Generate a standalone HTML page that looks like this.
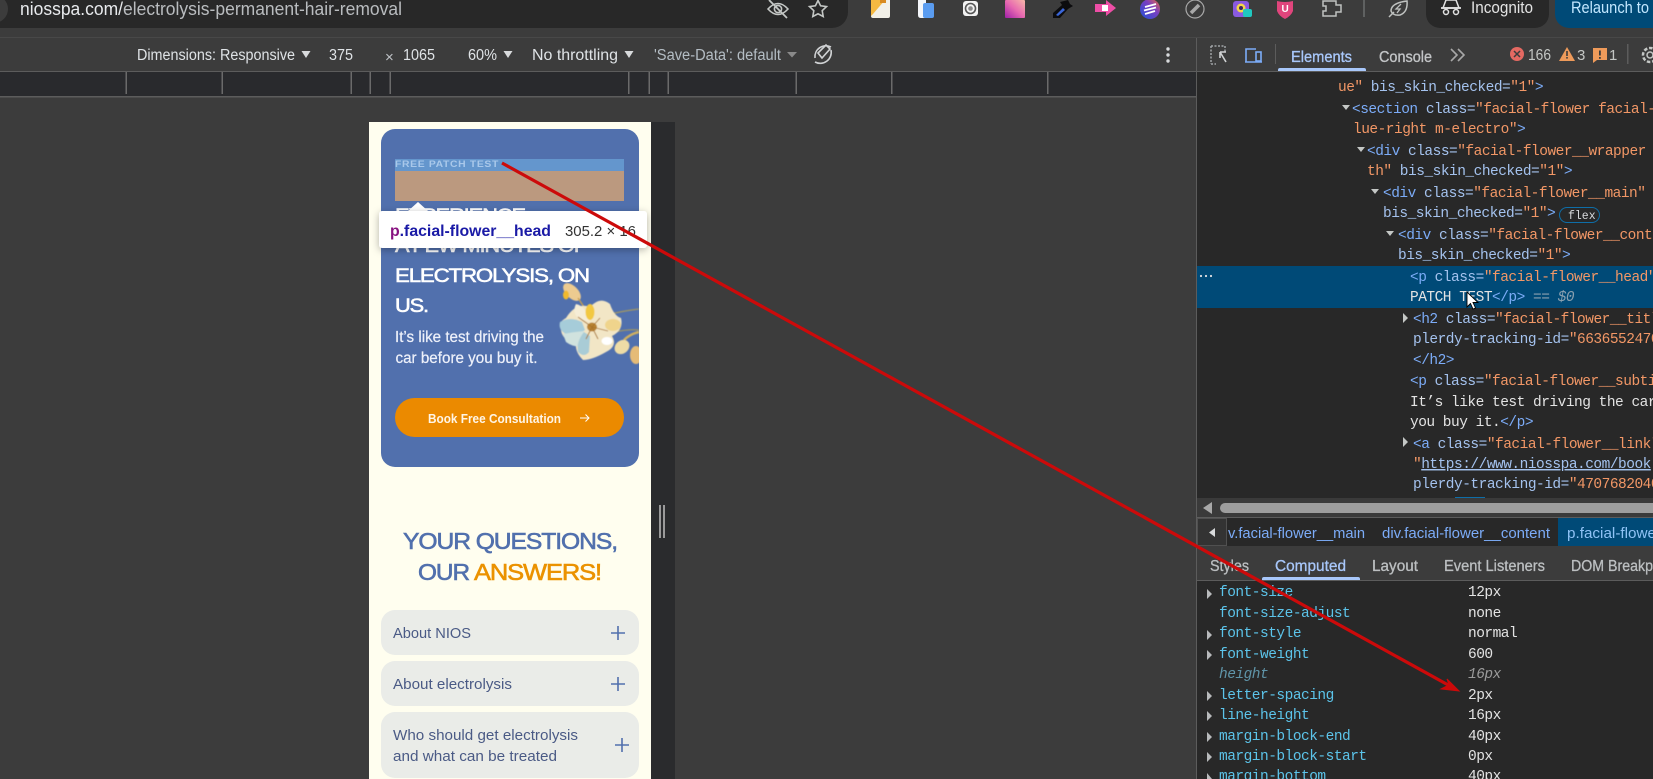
<!DOCTYPE html>
<html lang="en"><head><meta charset="utf-8"><title>niosspa.com</title>
<style>
html,body{margin:0;padding:0;background:#3c3c3c;overflow:hidden;width:1653px;height:779px}
svg{display:block;position:absolute;left:0;top:0}
text{white-space:pre;font-family:"Liberation Sans",sans-serif}
.ui{fill:#dfe3e6;font-size:15.5px}
.m{font-family:"Liberation Mono",monospace;font-size:14.5px;letter-spacing:-.5px;stroke-width:.15px}
.t{fill:#7cacf8}.a{fill:#a4c2ee}.v{fill:#f29766}.w{fill:#e3e3e3}
.n{fill:#5cc4ea}.val{fill:#e3e3e3}
</style></head><body>
<svg width="1653" height="779" viewBox="0 0 1653 779" xmlns="http://www.w3.org/2000/svg">
<defs>
<clipPath id="card"><rect x="381" y="129" width="258" height="338" rx="14"/></clipPath>
<clipPath id="dt"><rect x="1197" y="72" width="456" height="707"/></clipPath>
<filter id="sh" x="-10%" y="-30%" width="120%" height="170%"><feDropShadow dx="0" dy="2" stdDeviation="4" flood-color="#000" flood-opacity=".3"/></filter>
<filter id="bl"><feGaussianBlur stdDeviation=".5"/></filter>
<linearGradient id="pk" x1="0" y1="1" x2="1" y2="0"><stop offset="0" stop-color="#a020a8"/><stop offset=".5" stop-color="#e86ab0"/><stop offset="1" stop-color="#f8b8a8"/></linearGradient>
<linearGradient id="ci" x1="0" y1="1" x2="1" y2="0"><stop offset="0" stop-color="#2050d8"/><stop offset=".6" stop-color="#7a3fc0"/><stop offset="1" stop-color="#f06a3a"/></linearGradient>
</defs>
<rect width="1653" height="779" fill="#3c3c3c"/>

<!-- Browser top bar -->
<path d="M0 0H848V12A16 16 0 0 1 832 28H0Z" fill="#282828"/>
<circle cx="-6" cy="9" r="14" fill="#3c3c3c"/>
<text x="20" y="15" font-size="18" textLength="382" lengthAdjust="spacingAndGlyphs" fill="#b9bcbf"><tspan fill="#e8eaed">niosspa.com/</tspan>electrolysis-permanent-hair-removal</text>
<!-- eye off -->
<g fill="none" stroke="#c4c7c5" stroke-width="1.6"><path d="M768 9Q778 -2 788 9Q778 20 768 9Z"/><circle cx="778" cy="9" r="3.6"/><path d="M769 0L787 18" stroke-width="1.8"/></g>
<path d="M818 0.500L820.600 5.800L826.500 6.600L822.200 10.700L823.200 16.500L818 13.800L812.800 16.500L813.800 10.700L809.500 6.600L815.400 5.800Z" fill="none" stroke="#c4c7c5" stroke-width="1.6"/>
<!-- extensions -->
<path d="M871 0H890V16Q890 18 888 18H873Q871 18 871 16Z" fill="#f2f0e8"/><path d="M871 0H885L873 14L871 16Z" fill="#f5b942"/><path d="M880 0h6v3h-6z" fill="#d88a20"/>
<path d="M918 0H926V18H921Q918 18 918 15Z" fill="#f4f6fa"/><rect x="923" y="3" width="11" height="15" rx="2" fill="#5a9cf0"/>
<rect x="963" y="1" width="15" height="15" rx="3" fill="#f2f2f2"/><circle cx="970.500" cy="8.500" r="5" fill="none" stroke="#555" stroke-width="1.6"/><circle cx="970.500" cy="8.500" r="2.300" fill="#888"/>
<rect x="1005" y="0" width="20" height="18" rx="1" fill="url(#pk)"/>
<path d="M1068 0L1070 4L1073 6L1068 9L1060 18H1053L1053 13L1062 5L1060 2Z" fill="#0c0c0e"/><path d="M1056 15L1063 8L1065 10L1058 16Z" fill="#3a66d8"/>
<path d="M1095 4H1106V0L1116 8L1106 16V12H1095Z" fill="#ee4ea6"/><rect x="1102" y="5" width="6" height="6" fill="#fff"/>
<circle cx="1150" cy="9" r="10" fill="url(#ci)"/><path d="M1145 7L1156 4M1144 10.500L1156 7.500M1145 14L1155 11" stroke="#fff" stroke-width="1.800"/>
<circle cx="1195" cy="9" r="9" fill="none" stroke="#a8a8a8" stroke-width="1.200"/><path d="M1191 13L1199 5" stroke="#a8a8a8" stroke-width="3.500"/>
<rect x="1233" y="1" width="16" height="16" rx="3" fill="#8a5ae0"/><circle cx="1241" cy="8" r="4.500" fill="#f4d648"/><circle cx="1241" cy="8" r="2" fill="#3a2a60"/><rect x="1243" y="9" width="9" height="8" rx="2" fill="#20c8c0"/>
<path d="M1277 1Q1285 3 1293 1V11Q1291 16 1285 19Q1279 16 1277 11Z" fill="#e0457c"/><text x="1281.500" y="12" font-size="10" font-weight="bold" fill="#fff">U</text>
<path d="M1324 1H1336V5H1341V12H1336V16H1323V11H1326V6H1323V1Z" fill="none" stroke="#bfc2c0" stroke-width="1.500"/>
<rect x="1363" y="0" width="2" height="17" fill="#5f6161"/>
<path d="M1407 1Q1408 12 1400 15Q1393 16 1391 11Q1391 3 1407 1ZM1389 17L1394 12" fill="none" stroke="#bfc2c0" stroke-width="1.500"/><path d="M1401 4L1396 9H1400L1397 13" fill="none" stroke="#bfc2c0" stroke-width="1.300"/>
<path d="M1426 0H1549V14A14 14 0 0 1 1535 28H1440A14 14 0 0 1 1426 14Z" fill="#282828"/>
<path d="M1443 8L1446 0H1456L1459 8Z" fill="none" stroke="#e3e3e3" stroke-width="1.500"/><path d="M1441 8H1461" stroke="#e3e3e3" stroke-width="1.800"/><circle cx="1446" cy="12" r="2.500" fill="none" stroke="#e3e3e3" stroke-width="1.500"/><circle cx="1456" cy="12" r="2.500" fill="none" stroke="#e3e3e3" stroke-width="1.500"/>
<text x="1471" y="13" font-size="16.500" textLength="62" lengthAdjust="spacingAndGlyphs" fill="#e3e3e3">Incognito</text>
<path d="M1555 0H1653V28H1569A14 14 0 0 1 1555 14Z" fill="#004a77"/>
<text x="1571" y="13" font-size="16.500" textLength="78" lengthAdjust="spacingAndGlyphs" fill="#c2e7ff">Relaunch to</text>
<rect y="37" width="1653" height="1" fill="#484848"/>

<!-- Device toolbar -->
<text x="137" y="60" textLength="158" lengthAdjust="spacingAndGlyphs" class="ui">Dimensions: Responsive</text>
<text x="329" y="60" textLength="24" lengthAdjust="spacingAndGlyphs" class="ui">375</text>
<text x="385" y="62" font-size="15" fill="#c0c4c8">×</text>
<text x="403" y="60" textLength="32" lengthAdjust="spacingAndGlyphs" class="ui">1065</text>
<text x="468" y="60" textLength="29" lengthAdjust="spacingAndGlyphs" class="ui">60%</text>
<text x="532" y="60" textLength="86" lengthAdjust="spacingAndGlyphs" class="ui">No throttling</text>
<text x="654" y="60" textLength="127" lengthAdjust="spacingAndGlyphs" style="fill:#b4bdc4;font-size:15.5px">'Save-Data': default</text>
<g fill="#d8dadc"><path d="M301.500 51h9l-4.500 7z"/><path d="M503.500 51h9l-4.500 7z"/><path d="M624.500 51h9l-4.500 7z"/></g>
<path d="M787 52h10l-5 5.500z" fill="#8a8a8a"/>
<g fill="none" stroke="#d0d2d4" stroke-width="1.600"><path d="M815 58A11 11 0 0 1 831 47"/><path d="M831 50A11 11 0 0 1 815 62"/><path d="M818 53L826 45L830 49L822 58Z"/></g>
<g fill="#d8dadc"><circle cx="1168" cy="49" r="1.700"/><circle cx="1168" cy="55" r="1.700"/><circle cx="1168" cy="61" r="1.700"/></g>
<rect y="71" width="1653" height="1" fill="#5c5c5c"/>

<!-- Ruler -->
<rect x="0" y="72" width="1196" height="24" fill="#292a2d"/>
<rect x="0" y="96" width="1196" height="1.500" fill="#5c5c5c"/>
<g fill="#6a6a6a"><rect x="125.500" y="72" width="1.500" height="22"/><rect x="221.500" y="72" width="1.500" height="22"/><rect x="350.500" y="72" width="1.500" height="22"/><rect x="369.500" y="72" width="1.500" height="22"/><rect x="389.500" y="72" width="1.500" height="22"/><rect x="628" y="72" width="1.500" height="22"/><rect x="648.500" y="72" width="1.500" height="22"/><rect x="667.500" y="72" width="1.500" height="22"/><rect x="795.500" y="72" width="1.500" height="22"/><rect x="891" y="72" width="1.500" height="22"/><rect x="1047" y="72" width="1.500" height="22"/></g>

<!-- Phone page -->
<rect x="651" y="122" width="24" height="657" fill="#2a2b2d"/>
<rect x="659" y="505" width="2" height="33" fill="#9a9a9a"/><rect x="663" y="505" width="2" height="33" fill="#9a9a9a"/>
<rect x="369" y="122" width="282" height="657" fill="#fffeef"/>
<rect x="381" y="129" width="258" height="338" rx="14" fill="#5170ad"/>
<rect x="395" y="159" width="229" height="12" fill="#6496cd"/>
<rect x="395" y="171" width="229" height="30" fill="#bb997f"/>
<text x="395" y="167" font-size="9.500" font-weight="bold" textLength="104" lengthAdjust="spacingAndGlyphs" fill="#a9c8ea" style="letter-spacing:.6px">FREE PATCH TEST</text>
<g fill="#fff" stroke="#fff" stroke-width=".55" font-size="19.500" style="letter-spacing:-1px">
<text x="395" y="222" textLength="130" lengthAdjust="spacingAndGlyphs">EXPERIENCE</text>
<text x="395" y="252" textLength="191" lengthAdjust="spacingAndGlyphs">A FEW MINUTES OF</text>
<text x="395" y="282" textLength="194" lengthAdjust="spacingAndGlyphs">ELECTROLYSIS, ON</text>
<text x="395" y="312" textLength="33" lengthAdjust="spacingAndGlyphs">US.</text>
</g>
<text x="395" y="342" font-size="15.500" textLength="149" lengthAdjust="spacingAndGlyphs" fill="#eef1fa" stroke="#eef1fa" stroke-width=".2">It’s like test driving the</text>
<text x="395.500" y="363" font-size="15.500" textLength="142" lengthAdjust="spacingAndGlyphs" fill="#eef1fa" stroke="#eef1fa" stroke-width=".2">car before you buy it.</text>
<!-- flower -->
<g clip-path="url(#card)"><g filter="url(#bl)">
<path d="M607 315Q622 311 639 309M615 332Q628 329 639 330" stroke="#9c9468" stroke-width="1.300" fill="none"/>
<path d="M624 340Q630 334 639 332" stroke="#d0b060" stroke-width="2.500" fill="none"/>
<ellipse cx="622" cy="347" rx="8" ry="6.500" transform="rotate(-40 622 347)" fill="#eedca6"/>
<ellipse cx="636" cy="355" rx="6" ry="9" fill="#e5bb77"/>
<ellipse cx="572" cy="292" rx="6" ry="11" transform="rotate(-45 572 292)" fill="#edcb90"/>
<ellipse cx="566" cy="295" rx="3" ry="4.500" fill="#f0b92f"/>
<path d="M578 298L590 316" stroke="#c8a050" stroke-width="1.300"/>
<path d="M566 318Q576 302 590 307Q600 296 610 304Q614 316 621 318Q624 330 612 336Q618 346 606 352Q592 360 583 360Q575 352 576 344Q562 340 561 330Q558 322 566 318Z" fill="#f2e6c6"/>
<path d="M560 322Q570 316 582 322L585 330Q576 336 566 334Q558 330 560 322Z" fill="#a6ccd9"/>
<path d="M563 334Q574 332 584 331L584 346Q574 348 566 342Z" fill="#d0e2de"/>
<path d="M584 332L590 336L589 352Q584 358 578 352Q576 342 584 332Z" fill="#a9ccd6"/>
<path d="M576 304Q586 306 590 322L578 318Q572 312 576 304Z" fill="#f5edd6"/>
<ellipse cx="590" cy="312" rx="4.500" ry="8" fill="#f2c83f"/>
<ellipse cx="613" cy="325" rx="8" ry="6" fill="#efd48c"/>
<ellipse cx="607" cy="341" rx="5.500" ry="4" fill="#fff"/>
<ellipse cx="592" cy="327" rx="5" ry="4.500" fill="#b88330"/>
<path d="M592 327L578 317M592 327L608 331M592 327L600 318M592 327L586 339M592 327L598 339" stroke="#a8722a" stroke-width=".9"/>
</g></g>
<!-- button -->
<rect x="395" y="398" width="229" height="39" rx="19.500" fill="#eb8a00"/>
<text x="428" y="423" font-size="12.500" font-weight="bold" textLength="133" lengthAdjust="spacingAndGlyphs" fill="#fff5e6">Book Free Consultation</text>
<path d="M580 418H589M585.500 414.500L589 418L585.500 421.500" fill="none" stroke="#fff" stroke-width="1"/>
<!-- heading -->
<g font-size="23" stroke-width=".6" style="letter-spacing:-1px">
<text x="403" y="549" textLength="214" lengthAdjust="spacingAndGlyphs" fill="#5170ad" stroke="#5170ad">YOUR QUESTIONS,</text>
<text x="418" y="580" textLength="51" lengthAdjust="spacingAndGlyphs" fill="#5170ad" stroke="#5170ad">OUR</text>
<text x="474" y="580" textLength="127" lengthAdjust="spacingAndGlyphs" fill="#eb9200" stroke="#eb9200">ANSWERS!</text>
</g>
<!-- FAQ -->
<g fill="#eaece8"><rect x="381" y="610" width="258" height="45" rx="14"/><rect x="381" y="661" width="258" height="45" rx="14"/><rect x="381" y="712" width="258" height="66" rx="14"/></g>
<g font-size="15" fill="#4a5a85">
<text x="393" y="638" textLength="78" lengthAdjust="spacingAndGlyphs">About NIOS</text>
<text x="393" y="689" textLength="119" lengthAdjust="spacingAndGlyphs">About electrolysis</text>
<text x="393" y="740" textLength="185" lengthAdjust="spacingAndGlyphs">Who should get electrolysis</text>
<text x="393" y="761" textLength="164" lengthAdjust="spacingAndGlyphs">and what can be treated</text>
</g>
<path d="M611 633H625M618 626V640M611 684H625M618 677V691M615 745H629M622 738V752" stroke="#5170ad" stroke-width="1.600" fill="none"/>

<!-- Tooltip -->
<path d="M408 211L418 202L428 211Z" fill="#fff"/>
<rect x="379" y="211" width="268" height="37" rx="3" fill="#fff" filter="url(#sh)"/>
<text x="390" y="236" font-size="15.500" font-weight="bold" textLength="161" lengthAdjust="spacingAndGlyphs" fill="#1a1aa6"><tspan fill="#881280">p</tspan>.facial-flower__head</text>
<text x="565" y="236" font-size="14.500" textLength="71" lengthAdjust="spacingAndGlyphs" fill="#333">305.2 × 16</text>

<!-- Devtools -->
<rect x="1196" y="38" width="457" height="33" fill="#3c3c3c"/>
<rect x="1196" y="38" width="1" height="741" fill="#5c5c5c"/>
<rect x="1197" y="72" width="456" height="707" fill="#282828"/>
<path d="M1211 46H1225M1211 46V64M1225 46V52M1211 64H1216" fill="none" stroke="#a0a3a6" stroke-width="1.500" stroke-dasharray="2 1.500"/>
<path d="M1220 52L1226 62M1220 52H1226M1220 52V58" fill="none" stroke="#d0d2d4" stroke-width="1.600"/>
<path d="M1245 62H1262M1246 62V49H1256" fill="none" stroke="#7cacf8" stroke-width="1.600"/><rect x="1256" y="52" width="5" height="9" fill="none" stroke="#7cacf8" stroke-width="1.600"/>
<rect x="1275" y="44" width="1" height="20" fill="#5c5c5c"/>
<text x="1291" y="62" font-size="16" stroke="#a8c7fa" stroke-width=".35" textLength="61" lengthAdjust="spacingAndGlyphs" fill="#a8c7fa">Elements</text>
<path d="M1278 71V70Q1278 68 1280 68H1364Q1366 68 1366 70V71Z" fill="#a8c7fa"/>
<text x="1379" y="62" font-size="16" stroke="#c2c4c6" stroke-width=".35" textLength="53" lengthAdjust="spacingAndGlyphs" fill="#c2c4c6">Console</text>
<path d="M1451 49L1457 55L1451 61M1458 49L1464 55L1458 61" fill="none" stroke="#a8a8a8" stroke-width="1.600"/>
<circle cx="1517" cy="54" r="7" fill="#e46962"/><path d="M1514 51L1520 57M1520 51L1514 57" stroke="#3c3c3c" stroke-width="1.500"/>
<text x="1528" y="60" font-size="16" textLength="23" lengthAdjust="spacingAndGlyphs" fill="#c4c7c5">166</text>
<path d="M1567 47L1575 61H1559Z" fill="#ee9a5a"/><rect x="1566.200" y="51" width="1.600" height="5" fill="#3c3c3c"/><rect x="1566.200" y="57" width="1.600" height="1.600" fill="#3c3c3c"/>
<text x="1577" y="60" font-size="15" fill="#c4c7c5">3</text>
<path d="M1593 48H1607V60H1597L1593 63Z" fill="#ee9a5a"/><rect x="1599" y="50.500" width="1.800" height="5" fill="#3c3c3c"/><rect x="1599" y="57" width="1.800" height="1.800" fill="#3c3c3c"/>
<text x="1609" y="60" font-size="15" fill="#c4c7c5">1</text>
<rect x="1627" y="44" width="1.500" height="20" fill="#5c5c5c"/>
<circle cx="1650" cy="55" r="7" fill="none" stroke="#c4c7c5" stroke-width="2.500" stroke-dasharray="3.500 1.800"/><circle cx="1650" cy="55" r="3" fill="none" stroke="#c4c7c5" stroke-width="1.500"/>

<g clip-path="url(#dt)">
<rect x="1197" y="266" width="456" height="42" fill="#004a77"/>
<g transform="translate(0 -1)">
<text x="1338" y="92" class="m"><tspan class="v">ue"</tspan><tspan class="a"> bis_skin_checked=</tspan><tspan class="v">"1"</tspan><tspan class="t">&gt;</tspan></text>
<text x="1352" y="114" class="m"><tspan class="t">&lt;section</tspan><tspan class="a"> class=</tspan><tspan class="v">"facial-flower facial-</tspan></text>
<text x="1353" y="134" class="m"><tspan class="v">lue-right m-electro"</tspan><tspan class="t">&gt;</tspan></text>
<text x="1367" y="156" class="m"><tspan class="t">&lt;div</tspan><tspan class="a"> class=</tspan><tspan class="v">"facial-flower__wrapper w</tspan></text>
<text x="1367" y="176" class="m"><tspan class="v">th"</tspan><tspan class="a"> bis_skin_checked=</tspan><tspan class="v">"1"</tspan><tspan class="t">&gt;</tspan></text>
<text x="1383" y="198" class="m"><tspan class="t">&lt;div</tspan><tspan class="a"> class=</tspan><tspan class="v">"facial-flower__main"</tspan></text>
<text x="1383" y="218" class="m"><tspan class="a">bis_skin_checked=</tspan><tspan class="v">"1"</tspan><tspan class="t">&gt;</tspan></text>
<text x="1398" y="240" class="m"><tspan class="t">&lt;div</tspan><tspan class="a"> class=</tspan><tspan class="v">"facial-flower__content"</tspan></text>
<text x="1398" y="260" class="m"><tspan class="a">bis_skin_checked=</tspan><tspan class="v">"1"</tspan><tspan class="t">&gt;</tspan></text>
<text x="1410" y="282" class="m"><tspan class="t">&lt;p</tspan><tspan class="a"> class=</tspan><tspan class="v">"facial-flower__head"</tspan><tspan class="t">&gt;</tspan></text>
<text x="1410" y="302" class="m"><tspan class="w">PATCH TEST</tspan><tspan class="t">&lt;/p&gt;</tspan><tspan fill="#8aa0b0" font-style="italic"> == $0</tspan></text>
<text x="1413" y="324" class="m"><tspan class="t">&lt;h2</tspan><tspan class="a"> class=</tspan><tspan class="v">"facial-flower__title"</tspan></text>
<text x="1413" y="344" class="m"><tspan class="a">plerdy-tracking-id=</tspan><tspan class="v">"66365524700"</tspan></text>
<text x="1413" y="365" class="m t">&lt;/h2&gt;</text>
<text x="1410" y="386" class="m"><tspan class="t">&lt;p</tspan><tspan class="a"> class=</tspan><tspan class="v">"facial-flower__subtitle"</tspan></text>
<text x="1410" y="407" class="m w">It’s like test driving the car</text>
<text x="1410" y="427" class="m"><tspan class="w">you buy it.</tspan><tspan class="t">&lt;/p&gt;</tspan></text>
<text x="1413" y="449" class="m"><tspan class="t">&lt;a</tspan><tspan class="a"> class=</tspan><tspan class="v">"facial-flower__link"</tspan></text>
<text x="1413" y="469" class="m"><tspan class="v">"</tspan><tspan class="a" text-decoration="underline">https://www.niosspa.com/book</tspan></text>
<text x="1413" y="489" class="m"><tspan class="a">plerdy-tracking-id=</tspan><tspan class="v">"47076820400"</tspan></text>
</g>
<rect x="1559.500" y="207.500" width="40" height="15" rx="7.500" fill="none" stroke="#0e6ea8" stroke-width="1"/>
<text x="1568" y="219" fill="#d8dadc" style="font-family:'Liberation Mono',monospace;font-size:11.500px">flex</text>
<g fill="#c4c7c5"><path d="M1342 105H1350L1346 110Z"/><path d="M1357 147H1365L1361 152Z"/><path d="M1371 189H1379L1375 194Z"/><path d="M1386 231H1394L1390 236Z"/><path d="M1403 313V323L1408 318Z"/><path d="M1403 437V447L1408 442Z"/></g>
<g fill="#dfe1e3"><circle cx="1201" cy="276" r="1.100"/><circle cx="1206" cy="276" r="1.100"/><circle cx="1211" cy="276" r="1.100"/></g>
<rect x="1455" y="497" width="30" height="1.500" fill="#0e6ea8"/>
</g>

<!-- horizontal scrollbar -->
<rect x="1197" y="498" width="456" height="19" fill="#3a3a3a"/>
<path d="M1212 502V514L1203 508Z" fill="#a8a8a8"/>
<path d="M1225 503H1653V513H1225A5 5 0 0 1 1225 503Z" fill="#9e9e9e"/>
<rect x="1197" y="517" width="456" height="1" fill="#5c5c5c"/>
<!-- breadcrumb -->
<rect x="1197" y="518" width="456" height="28" fill="#282828"/>
<rect x="1197.500" y="518.500" width="29" height="27" fill="#333" stroke="#505050"/>
<path d="M1215 528V537L1209 532.500Z" fill="#d8dadc"/>
<text x="1228" y="538" font-size="15" textLength="137" lengthAdjust="spacingAndGlyphs" fill="#7cacf8">v.facial-flower__main</text>
<text x="1382" y="538" font-size="15" textLength="168" lengthAdjust="spacingAndGlyphs" fill="#7cacf8">div.facial-flower__content</text>
<rect x="1558" y="518" width="95" height="28" fill="#004a77"/>
<text x="1567" y="538" font-size="15" textLength="89" lengthAdjust="spacingAndGlyphs" fill="#8fc2f5">p.facial-flowe</text>
<!-- sidebar tabs -->
<rect x="1197" y="546" width="456" height="34" fill="#3c3c3c"/>
<rect x="1197" y="580" width="456" height="1" fill="#5c5c5c"/>
<g font-size="15.500" fill="#bcbfc1" stroke="#bcbfc1" stroke-width=".3">
<text x="1210" y="571" textLength="39" lengthAdjust="spacingAndGlyphs">Styles</text>
<text x="1275" y="571" textLength="71" lengthAdjust="spacingAndGlyphs" fill="#a8c7fa" stroke="#a8c7fa">Computed</text>
<text x="1372" y="571" textLength="46" lengthAdjust="spacingAndGlyphs">Layout</text>
<text x="1444" y="571" textLength="101" lengthAdjust="spacingAndGlyphs">Event Listeners</text>
<text x="1571" y="571" textLength="82" lengthAdjust="spacingAndGlyphs">DOM Breakp</text>
</g>
<path d="M1262 580V579Q1262 577 1264 577H1358Q1360 577 1360 579V580Z" fill="#a8c7fa"/>
<!-- computed list -->
<g transform="translate(0 -1)">
<text x="1219" y="597" class="m n">font-size</text><text x="1468" y="597" class="m val">12px</text>
<text x="1219" y="618" class="m n">font-size-adjust</text><text x="1468" y="618" class="m val">none</text>
<text x="1219" y="638" class="m n">font-style</text><text x="1468" y="638" class="m val">normal</text>
<text x="1219" y="659" class="m n">font-weight</text><text x="1468" y="659" class="m val">600</text>
<text x="1219" y="679" class="m" fill="#5f94a8" font-style="italic">height</text><text x="1468" y="679" class="m" fill="#9a9a9a" font-style="italic">16px</text>
<text x="1219" y="700" class="m n">letter-spacing</text><text x="1468" y="700" class="m val">2px</text>
<text x="1219" y="720" class="m n">line-height</text><text x="1468" y="720" class="m val">16px</text>
<text x="1219" y="741" class="m n">margin-block-end</text><text x="1468" y="741" class="m val">40px</text>
<text x="1219" y="761" class="m n">margin-block-start</text><text x="1468" y="761" class="m val">0px</text>
<text x="1219" y="781" class="m n">margin-bottom</text><text x="1468" y="781" class="m val">40px</text>
</g>
<g fill="#b8babc"><path d="M1207 589V599L1212 594Z"/><path d="M1207 630V640L1212 635Z"/><path d="M1207 650V660L1212 655Z"/><path d="M1207 691V701L1212 696Z"/><path d="M1207 711V721L1212 716Z"/><path d="M1207 732V742L1212 737Z"/><path d="M1207 752V762L1212 757Z"/><path d="M1207 773V779H1212Z"/></g>

<!-- Mouse cursor -->
<path d="M1467 292V307L1470.500 303.500L1473 309L1475.500 308L1473 302.500H1478Z" fill="#fff" stroke="#000" stroke-width=".9"/>

<!-- Red annotation arrow -->
<path d="M502 163L1450 686" stroke="#cc0a0a" stroke-width="3.200" fill="none"/>
<path d="M1459 691L1447 679L1449 685L1441 689Z" fill="#cc0a0a" stroke="#cc0a0a" stroke-width="1"/>
</svg>
</body></html>
